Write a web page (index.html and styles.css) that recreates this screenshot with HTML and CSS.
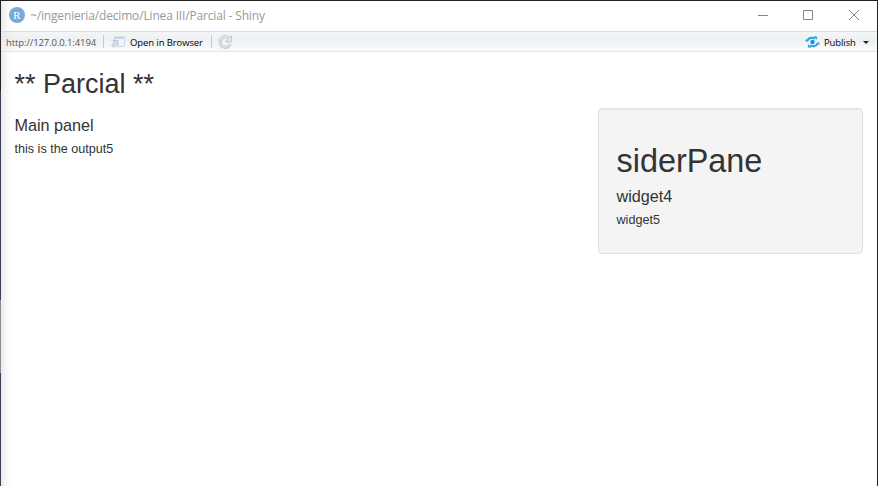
FILE: index.html
```html
<!DOCTYPE html>
<html lang="en">
<head>
<meta charset="utf-8">
<title>~/ingenieria/decimo/Linea III/Parcial - Shiny</title>
<link rel="stylesheet" href="styles.css">
</head>
<body>
<div class="window">
  <header class="titlebar">
    <span class="logo">R</span>
    <span class="title">~/ingenieria/decimo/Linea III/Parcial - Shiny</span>
    <svg class="controls" width="104" height="12" viewBox="0 0 104 12" fill="none" stroke="#858585">
      <path d="M0 6.5h10M45.5 1.5h9v9h-9zM91 1l10 10M101 1L91 11"/>
    </svg>
  </header>
  <nav class="toolbar">
    <span class="url">http://127.0.0.1:4194</span>
    <i class="sep"></i>
    <svg class="open-icon" width="15" height="12" viewBox="0 0 15 12">
      <rect x="3.5" y=".5" width="10" height="10" rx="1.5" fill="#f0f5fa" stroke="#cbdbe9"/>
      <path d="M3.5 2h10" stroke="#c0d7ec" stroke-width="2"/>
      <path d="M2 4.500h5v5L5.500 8 2.500 11 .5 9.500 3.500 6z" fill="#d9dfe6" stroke="#b3bdc9" stroke-width=".8"/>
    </svg>
    <span class="open">Open in Browser</span>
    <i class="sep second"></i>
    <svg class="reload" width="15" height="14" viewBox="0 0 15 14" fill="none">
      <path d="M11.500 3.600A5.300 5.300 0 1 0 12.300 9" stroke="#b5c2d0" stroke-width="3"/>
      <path d="M13.500.8v6H7.500z" fill="#e4ebf2" stroke="#b5c2d0" stroke-width=".9"/>
      <path d="M11.300 3.700A5.200 5.200 0 1 0 12.100 8.800" stroke="#e4ebf2" stroke-width="1.300"/>
    </svg>
    <svg class="publish-icon" width="15" height="12" viewBox="0 0 15 12" fill="none" stroke="#27a0e4">
      <path d="M.5 4.500h2C3.500 2 6.500 1 10 2.600M14.500 7.500h-2C11.500 10 8.500 11 5 9.400" stroke-width="2"/>
      <path d="M8.800.1l3.500.7-.6 3.300zM6.200 11.900l-3.500-.7.6-3.300z" fill="#27a0e4" stroke="none"/>
      <circle cx="7.500" cy="6" r="2.200" fill="#1993dc" stroke="none"/>
    </svg>
    <span class="publish">Publish</span>
    <i class="caret"></i>
  </nav>
  <div class="page">
    <h2>** Parcial **</h2>
    <div class="row">
      <main>
        <h4>Main panel</h4>
        <h5>this is the output5</h5>
      </main>
      <aside class="well">
        <h1>siderPane</h1>
        <h4>widget4</h4>
        <h5>widget5</h5>
      </aside>
    </div>
  </div>
</div>
</body>
</html>
```
FILE: styles.css
```css
* { box-sizing: border-box; }
body {
  margin: 0;
  color: #333;
  background: #fff;
  font-family: "Liberation Sans", Arial, sans-serif;
}
.window {
  height: 486px;
  overflow: hidden;
  border-top: 1px solid #242226;
  border-right: 1px solid #242226;
  padding-left: 1px;
  background:
    linear-gradient(#242226 0 90px, #39405a 90px 299px, #8d8b8c 299px 372px, #39405a 372px) 0 0 / 1px 100% no-repeat,
    linear-gradient(90deg, #e9e8e9, #f7f7f7 6px, #fff 13px);
}
.titlebar {
  display: flex;
  align-items: center;
  height: 30px;
  padding: 0 18px 2px 8px;
}
.logo {
  width: 16px;
  height: 16px;
  border-radius: 50%;
  background: #75aadb;
  color: #fff;
  font: 11px/16px "Liberation Serif", serif;
  text-align: center;
}
.title {
  margin-left: 5px;
  padding-top: 2px;
  color: #999;
  font: 12px/16px "Open Sans", sans-serif;
  letter-spacing: -.16px;
  white-space: nowrap;
}
.controls { margin-left: auto; margin-right: -3px; }
.toolbar {
  display: flex;
  align-items: center;
  height: 21px;
  padding: 0 8px 0 5px;
  border-top: 1px solid #d9dcdf;
  border-bottom: 1px solid #e2e4e6;
  background: linear-gradient(90deg, rgba(225, 223, 224, .5), transparent 13px), linear-gradient(#f3f5f6, #eef1f3 40%, #f9fafa);
  color: #000;
  font: 9.5px/14px "Open Sans", sans-serif;
  white-space: nowrap;
}
.toolbar span { padding-top: 2px; }
.url { width: 91px; color: #555; letter-spacing: -.1px; }
.sep { width: 1px; height: 13px; margin-left: 6px; background: #c6cacd; }
.open-icon { margin-left: 7px; }
.open { width: 73px; margin-left: 4px; letter-spacing: -.1px; }
.sep.second { margin-left: 8px; }
.reload { margin-left: 6px; }
.publish-icon { margin-left: auto; }
.publish { width: 32px; margin-left: 4px; letter-spacing: -.1px; }
.caret {
  margin: 2px 0 0 7px;
  border: 3px solid transparent;
  border-top-color: #222;
  border-bottom: 0;
}
.page { padding: 18px 14px 0 13.5px; }
h1, h2, h4, h5 { margin: 9px 0; font-weight: 400; line-height: 1.1; }
h1 { margin-top: 18px; font-size: 32.4px; }
h2 { margin: 0 0 8px; font-size: 27px; }
h4 { margin-bottom: 8px; font-size: 16.2px; }
h5 { margin-top: 8px; font-size: 12.6px; }
.row { display: flex; justify-content: space-between; }
.well {
  width: 265px;
  height: 146px;
  padding: 17px 17.5px;
  border: 1px solid #e0e0e0;
  border-radius: 4px;
  background: #f4f4f4;
  box-shadow: inset 0 1px 1px rgba(0, 0, 0, .05);
}
```
